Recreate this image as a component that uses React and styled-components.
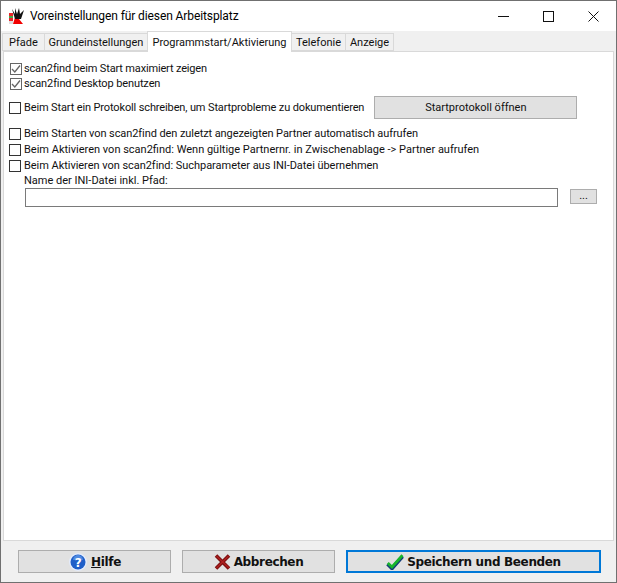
import React from "react";
import styled, { createGlobalStyle } from "styled-components";

const Global = createGlobalStyle`
  html, body { margin: 0; padding: 0; background: #f0f0f0; }
  * { box-sizing: border-box; }
`;

const Win = styled.div`
  width: 617px; height: 583px; background: #f0f0f0;
  border: 1px solid #707070; display: flex; flex-direction: column;
  font-family: Roboto, "Liberation Sans", sans-serif; font-size: 11px; color: #111; overflow: hidden;
`;
const TitleBar = styled.div`
  height: 30px; flex: none; background: #fff; display: flex; align-items: center; padding-left: 8px;
`;
const AppIcon = styled.svg`width: 16px; height: 16px; flex: none;`;
const Title = styled.div`
  margin-left: 5px; font-size: 12px; letter-spacing: -0.1px; font-family: Roboto, sans-serif; color: #000; flex: 1; white-space: nowrap;
`;
const WinBtn = styled.div`
  width: 45px; height: 30px; display: flex; align-items: center; justify-content: center;
`;
const Tabs = styled.div`
  height: 20px; flex: none; display: flex; align-items: flex-end; padding-left: 2px; background: #f0f0f0; position: relative; z-index: 1;
`;
const Tab = styled.div`
  width: ${p => p.$w}px;
  height: ${p => p.$active ? "21px" : "18px"};
  margin-bottom: ${p => p.$active ? "-1px" : "0"};
  background: ${p => p.$active ? "#fff" : "#f0f0f0"};
  border: 1px solid #d9d9d9;
  border-bottom: ${p => p.$active ? "none" : "1px solid #d9d9d9"};
  margin-left: -1px;
  display: flex; align-items: center; justify-content: center; white-space: nowrap;
`;
const Panel = styled.div`
  height: 490px; flex: none; margin: 0 2px 0 2px; background: #fff; border: 1px solid #d9d9d9; padding: 9px 5px 0 5px;
  display: flex; flex-direction: column;
`;
const Row = styled.div`
  display: flex; align-items: center; height: 15px; white-space: nowrap; margin-top: ${p => p.$mt || 0}px;
`;
const Label = styled.span`
  letter-spacing: ${p => p.$track || 0}px;
`;
const Box = styled.span`
  width: 12px; height: 12px; flex: none; background: #fff; border: 1px solid ${p => p.$on ? "#666" : "#333"};
  margin: ${p => p.$on ? "0 2px 0 1px" : "0 3px 0 0"};
  display: flex; align-items: center; justify-content: center;
`;
const WideRow = styled(Row)`height: 23px;`;
const StartBtn = styled.div`
  width: 203px; height: 23px; margin-left: 10px; background: #e1e1e1; border: 1px solid #adadad;
  display: flex; align-items: center; justify-content: center;
`;
const IniLabel = styled.div`margin-left: 15px; height: 14px; line-height: 14px; margin-top: 1px;`;
const IniRow = styled.div`display: flex; align-items: flex-start; margin: 0 11px 0 16px;`;
const Input = styled.div`flex: 1; height: 19px; border: 1px solid #7a7a7a; background: #fff; `;
const Dots = styled.div`
  width: 27px; height: 15px; margin: 1px 0 0 12px; background: #e1e1e1; border: 1px solid #adadad;
  display: flex; align-items: flex-end; justify-content: center; line-height: 10px; padding-bottom: 2px;
`;
const Footer = styled.div`
  flex: 1; display: flex; align-items: flex-start; padding: 9px 0 0 17px;
`;
const FootBtn = styled.div`
  height: 23px; width: ${p => p.$w}px; margin-right: ${p => p.$mr || 0}px; background: #e1e1e1;
  border: ${p => p.$primary ? "2px solid #0078d7" : "1px solid #adadad"};
  display: flex; align-items: center; justify-content: center; gap: 3px;
  font-family: "DejaVu Sans", sans-serif; font-weight: 700; font-size: 12px; letter-spacing: -0.35px; color: #111;
`;
const U = styled.span`text-decoration: underline;`;

const Check = () => (
  <svg width="10" height="10" viewBox="0 0 10 10"><path d="M1 5 L3.8 8 L9 1.5" fill="none" stroke="#666" strokeWidth="1.3" /></svg>
);

export default function App() {
  return (
    <>
      <Global />
      <Win>
        <TitleBar>
          <AppIcon viewBox="0 0 16 16">
            <path d="M0 5h4v11H0z" fill="#e8262a" />
            <path d="M0 8h4v2H0z" fill="#44a84a" />
            <path d="M0 13h4v3H0z" fill="#ddd" />
            <path d="M7 6 L4 16 H14 L10 11z" fill="#f00000" />
            <path d="M3 1 L6 6 L6 0 L8 6 L10 0 L11 6 L15 2 L12 11 H6z" fill="#111" />
          </AppIcon>
          <Title>Voreinstellungen für diesen Arbeitsplatz</Title>
          <WinBtn><svg width="11" height="11"><path d="M0 5.5h11" stroke="#111" /></svg></WinBtn>
          <WinBtn><svg width="11" height="11"><rect x=".5" y=".5" width="10" height="10" fill="none" stroke="#111" /></svg></WinBtn>
          <WinBtn><svg width="11" height="11"><path d="M.5.5l10 10M10.5.5l-10 10" stroke="#111" /></svg></WinBtn>
        </TitleBar>
        <Tabs>
          <Tab $w={43}>Pfade</Tab>
          <Tab $w={104}>Grundeinstellungen</Tab>
          <Tab $active $w={145}>Programmstart/Aktivierung</Tab>
          <Tab $w={55}>Telefonie</Tab>
          <Tab $w={49}>Anzeige</Tab>
        </Tabs>
        <Panel>
          <Row><Box $on><Check /></Box><Label $track={-0.16}>scan2find beim Start maximiert zeigen</Label></Row>
          <Row><Box $on><Check /></Box><Label $track={-0.11}>scan2find Desktop benutzen</Label></Row>
          <WideRow $mt={5}><Box /><Label $track={-0.13}>Beim Start ein Protokoll schreiben, um Startprobleme zu dokumentieren</Label><StartBtn>Startprotokoll öffnen</StartBtn></WideRow>
          <Row $mt={7}><Box /><Label $track={-0.08}>Beim Starten von scan2find den zuletzt angezeigten Partner automatisch aufrufen</Label></Row>
          <Row $mt={1}><Box /><Label>Beim Aktivieren von scan2find: Wenn gültige Partnernr. in Zwischenablage -&gt; Partner aufrufen</Label></Row>
          <Row $mt={1}><Box /><Label $track={-0.04}>Beim Aktivieren von scan2find: Suchparameter aus INI-Datei übernehmen</Label></Row>
          <IniLabel>Name der INI-Datei inkl. Pfad:</IniLabel>
          <IniRow><Input /><Dots>...</Dots></IniRow>
        </Panel>
        <Footer>
          <FootBtn $w={153} $mr={11}>
            <svg width="20" height="20" viewBox="0 0 20 20">
              <circle cx="10" cy="10" r="9" fill="#e3ebfb" />
              <circle cx="10" cy="10" r="7.5" fill="#1f5fc8" />
              <path d="M5 8a5 5 0 0 1 10 0z" fill="#4f8ae0" />
              <text x="10" y="14.5" textAnchor="middle" fontSize="12" fontWeight="700" fill="#fff" fontFamily="DejaVu Sans">?</text>
            </svg>
            <span><U>H</U>ilfe</span>
          </FootBtn>
          <FootBtn $w={153} $mr={11}>
            <svg width="17" height="16" viewBox="0 0 17 16">
              <path d="M2 1.5 L15 14.5 M15 1.5 L2 14.5" stroke="#7d1010" strokeWidth="3.6" />
              <path d="M2.5 2 L15 14 M14.5 2 L2.5 14" stroke="#b02020" strokeWidth="1.2" />
            </svg>
            Abbrechen
          </FootBtn>
          <FootBtn $w={255} $primary>
            <svg width="18" height="16" viewBox="0 0 18 16">
              <path d="M1.5 10 L6 14.5 L16.5 2.5" fill="none" stroke="#123a78" strokeWidth="3.6" />
              <path d="M1.8 9 L6 13 L16.5 1.2" fill="none" stroke="#17b52c" strokeWidth="2.8" />
            </svg>
            Speichern und Beenden
          </FootBtn>
        </Footer>
      </Win>
    </>
  );
}
